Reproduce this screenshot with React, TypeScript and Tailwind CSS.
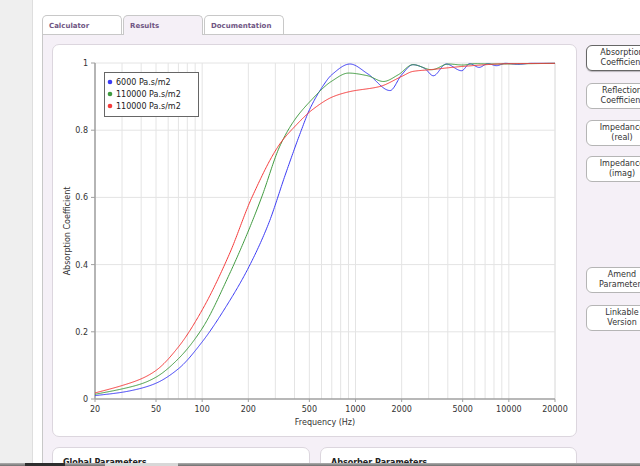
import React from 'react';

type Pt = [number, number];

// monotone cubic through (log f, value) control points, so peaks stay where they were read
const monotone = (raw: Pt[]) => {
  const xs = raw.map((p) => Math.log10(p[0]));
  const ys = raw.map((p) => p[1]);
  const n = xs.length;
  const dx: number[] = [];
  const m: number[] = [];
  for (let i = 0; i < n - 1; i++) {
    dx.push(xs[i + 1] - xs[i]);
    m.push((ys[i + 1] - ys[i]) / dx[i]);
  }
  const t: number[] = [m[0]];
  for (let i = 1; i < n - 1; i++) {
    if (m[i - 1] * m[i] <= 0) t.push(0);
    else {
      const w1 = 2 * dx[i] + dx[i - 1];
      const w2 = dx[i] + 2 * dx[i - 1];
      t.push((w1 + w2) / (w1 / m[i - 1] + w2 / m[i]));
    }
  }
  t.push(m[n - 2]);
  return (f: number) => {
    const x = Math.log10(f);
    let i = 0;
    while (i < n - 2 && x > xs[i + 1]) i++;
    const h = dx[i];
    const s = (x - xs[i]) / h;
    const s2 = s * s;
    const s3 = s2 * s;
    return (
      (2 * s3 - 3 * s2 + 1) * ys[i] +
      (s3 - 2 * s2 + s) * h * t[i] +
      (-2 * s3 + 3 * s2) * ys[i + 1] +
      (s3 - s2) * h * t[i + 1]
    );
  };
};

const X0 = 42;
const X1 = 502;
const Y0 = 18;
const Y1 = 354;
const px = (f: number) => X0 + ((X1 - X0) / 3) * Math.log10(f / 20);
const py = (v: number) => Y1 - (Y1 - Y0) * v;

const series: { label: string; color: string; pts: Pt[] }[] = [
  {
    label: '6000 Pa.s/m2',
    color: '#3b3bf5',
    pts: [
      [20, 0.01], [30, 0.02], [40, 0.032], [50, 0.047], [70, 0.09], [100, 0.17], [150, 0.29],
      [200, 0.39], [270, 0.52], [350, 0.67], [435, 0.79], [500, 0.86], [600, 0.925], [700, 0.965],
      [920, 0.997], [1200, 0.968], [1680, 0.918], [2000, 0.965], [2370, 0.995], [2800, 0.985],
      [3220, 0.962], [3900, 0.997], [4920, 0.977], [5560, 0.998], [6400, 0.987], [7300, 0.998],
      [8300, 0.992], [9500, 0.999], [11500, 0.996], [14000, 0.999], [20000, 0.999],
    ],
  },
  {
    label: '110000 Pa.s/m2',
    color: '#3f9a3f',
    pts: [
      [20, 0.014], [30, 0.03], [40, 0.045], [50, 0.065], [70, 0.12], [100, 0.21], [150, 0.37],
      [200, 0.5], [244, 0.6], [322, 0.754], [400, 0.83], [504, 0.885], [700, 0.946], [900, 0.97],
      [1200, 0.962], [1520, 0.945], [1900, 0.965], [2370, 0.995], [3140, 0.98], [4040, 0.997],
      [5000, 0.994], [6000, 0.998], [8000, 0.997], [20000, 0.999],
    ],
  },
  {
    label: '110000 Pa.s/m2',
    color: '#f53b3b',
    pts: [
      [20, 0.018], [30, 0.04], [40, 0.06], [50, 0.085], [70, 0.155], [100, 0.265], [150, 0.43],
      [211, 0.6], [322, 0.76], [400, 0.81], [530, 0.863], [716, 0.9], [920, 0.915], [1440, 0.93],
      [2000, 0.96], [2370, 0.975], [3060, 0.98], [5050, 0.99], [10000, 0.998], [20000, 0.999],
    ],
  },
];

const pathFor = (pts: Pt[]) => {
  const fn = monotone(pts);
  const out: string[] = [];
  for (let i = 0; i <= 600; i++) {
    const f = 20 * Math.pow(1000, i / 600);
    out.push(`${px(f).toFixed(2)},${py(fn(f)).toFixed(2)}`);
  }
  return out.join(' ');
};

const gridFreqs: number[] = [];
[10, 100, 1000, 10000].forEach((dec) => {
  for (let k = 1; k <= 9; k++) {
    const f = dec * k;
    if (f >= 20 && f <= 20000) gridFreqs.push(f);
  }
});
gridFreqs.push(20000);

const xLabels = [20, 50, 100, 200, 500, 1000, 2000, 5000, 10000, 20000];
const yLabels = [0, 0.2, 0.4, 0.6, 0.8, 1];

const Chart = () => (
  <svg width={523} height={391} className="block" style={{ fontFamily: '"DejaVu Sans", Verdana, sans-serif' }}>
    {gridFreqs.map((f) => (
      <line key={f} x1={px(f)} x2={px(f)} y1={Y0} y2={Y1} stroke="#e4e4e4" strokeWidth={1} />
    ))}
    {yLabels.slice(1).map((v) => (
      <line key={v} x1={X0} x2={X1} y1={py(v)} y2={py(v)} stroke="#e4e4e4" strokeWidth={1} />
    ))}
    <line x1={X0} x2={X0} y1={Y0} y2={Y1} stroke="#a0a0a0" strokeWidth={1.5} />
    <line x1={X0} x2={X1} y1={Y1} y2={Y1} stroke="#a0a0a0" strokeWidth={1.5} />
    {yLabels.map((v) => (
      <g key={v}>
        <line x1={X0 - 4} x2={X0} y1={py(v)} y2={py(v)} stroke="#a0a0a0" />
        <text x={X0 - 7} y={py(v) + 3} textAnchor="end" fontSize={8} fill="#333">
          {v === 0 || v === 1 ? String(v) : v.toFixed(1)}
        </text>
      </g>
    ))}
    {xLabels.map((f) => (
      <g key={f}>
        <line x1={px(f)} x2={px(f)} y1={Y1} y2={Y1 + 3} stroke="#a0a0a0" />
        <text x={px(f)} y={Y1 + 13} textAnchor="middle" fontSize={8} fill="#333">
          {f}
        </text>
      </g>
    ))}
    <text x={272} y={380} textAnchor="middle" fontSize={8} fill="#333">
      Frequency (Hz)
    </text>
    <text
      x={17}
      y={(Y0 + Y1) / 2}
      textAnchor="middle"
      fontSize={8}
      fill="#333"
      transform={`rotate(-90 17 ${(Y0 + Y1) / 2})`}
    >
      Absorption Coefficient
    </text>
    {series.map((s, i) => (
      <polyline key={i} points={pathFor(s.pts)} fill="none" stroke={s.color} strokeWidth={1} />
    ))}
    <rect x={51.5} y={27.5} width={94} height={44} fill="#fff" stroke="#666" />
    {series.map((s, i) => (
      <g key={i}>
        <circle cx={57} cy={37 + i * 12} r={2.3} fill={s.color} />
        <text x={63} y={40 + i * 12} fontSize={8} fill="#222">
          {s.label}
        </text>
      </g>
    ))}
  </svg>
);

const SideButton = ({ top, bottom, mt, active }: { top: string; bottom: string; mt: string; active?: boolean }) => (
  <div
    className={`${mt} h-[26px] w-[72px] shrink-0 rounded-[6px] border bg-white flex flex-col items-center justify-center text-[8px] leading-[10px] text-[#333] ${
      active ? 'border-[#666] shadow-[0_1px_1px_rgba(0,0,0,0.25)]' : 'border-[#b5b5b5]'
    }`}
  >
    <span>{top}</span>
    <span>{bottom}</span>
  </div>
);

export default function App() {
  return (
    <div className="relative flex h-[466px] w-[640px] overflow-hidden bg-white font-['DejaVu_Sans',Verdana,sans-serif]">
      <div className="h-full w-[33px] shrink-0 border-r border-[#dedede] bg-[#efefef]" />
      <div className="flex min-w-0 flex-1 flex-col pl-[9px]">
        <div className="mt-[4px] h-[2px] bg-[#9b82a9]" />
        <div className="relative z-10 -mb-px mt-[11px] flex items-start gap-px">
          <div className="h-[19px] w-[80px] rounded-t-[5px] border border-b-0 border-[#c8c8c8] bg-white pl-[6px] pt-[5px] text-[7px] font-bold text-[#6f5583]">
            Calculator
          </div>
          <div className="h-[20px] w-[80px] rounded-t-[5px] border border-b-0 border-[#c8c8c8] bg-[#f5f0f7] pl-[6px] pt-[5px] text-[7px] font-bold text-[#6f5583]">
            Results
          </div>
          <div className="h-[19px] w-[80px] rounded-t-[5px] border border-b-0 border-[#c8c8c8] bg-white pl-[6px] pt-[5px] text-[7px] font-bold text-[#6f5583]">
            Documentation
          </div>
        </div>
        <div className="flex flex-1 border-l border-t border-[#c8c8c8] bg-[#f5f0f7] pl-[9px] pt-[9px]">
          <div className="flex w-[525px] shrink-0 flex-col">
            <div className="h-[393px] rounded-[7px] border border-[#dcd6de] bg-white">
              <Chart />
            </div>
            <div className="mt-[10px] flex gap-[10px]">
              <div className="h-[40px] w-[258px] shrink-0 rounded-t-[7px] border border-[#dcd6de] bg-white pl-[10px] pt-[9px] text-[8px] font-bold text-[#222]">
                Global Parameters
              </div>
              <div className="h-[40px] w-[257px] shrink-0 rounded-t-[7px] border border-[#dcd6de] bg-white pl-[10px] pt-[9px] text-[8px] font-bold text-[#222]">
                Absorber Parameters
              </div>
            </div>
          </div>
          <div className="ml-[9px] flex shrink-0 flex-col">
            <SideButton top="Absorption" bottom="Coefficient" mt="mt-[1px]" active />
            <SideButton top="Reflection" bottom="Coefficient" mt="mt-[12px]" />
            <SideButton top="Impedance" bottom="(real)" mt="mt-[11px]" />
            <SideButton top="Impedance" bottom="(imag)" mt="mt-[10px]" />
            <SideButton top="Amend" bottom="Parameters" mt="mt-[85px]" />
            <SideButton top="Linkable" bottom="Version" mt="mt-[12px]" />
          </div>
        </div>
      </div>
      <div className="absolute bottom-0 left-0 right-0 flex h-[3px] bg-gradient-to-b from-[#b0b0b0] to-[#6e6e6e]">
        <div className="ml-[25px] h-full w-[40px] bg-[#2e2e2e]" />
        <div className="ml-[40px] h-full w-[73px] bg-[#d8d8d8]" />
      </div>
    </div>
  );
}
